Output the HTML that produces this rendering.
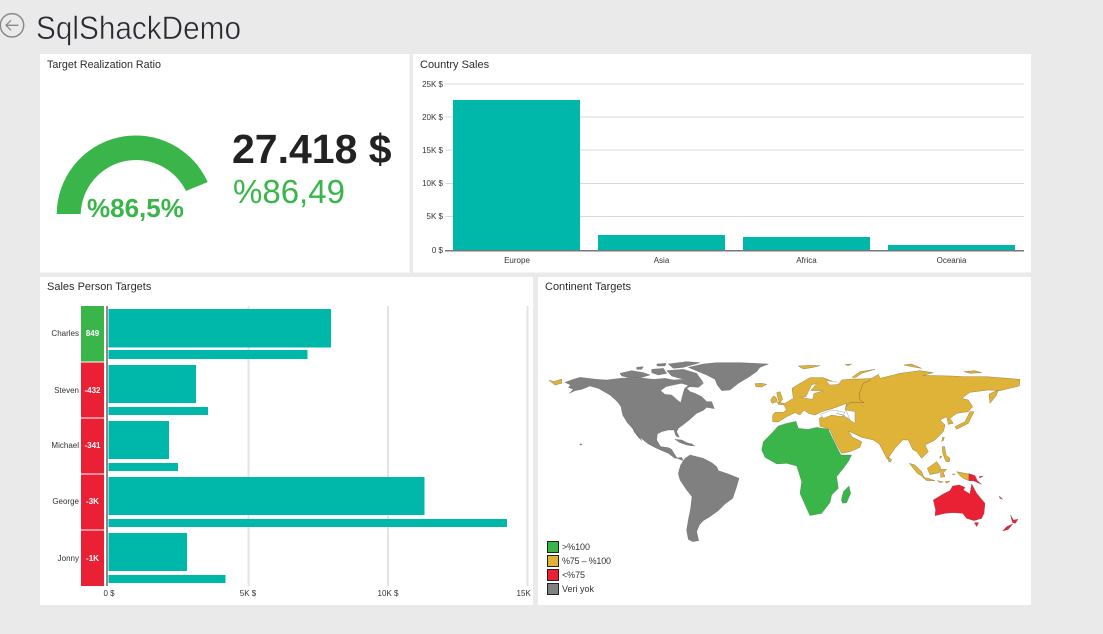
<!DOCTYPE html>
<html><head><meta charset="utf-8"><style>
html,body{margin:0;padding:0;background:#eaeaea;width:1103px;height:634px;overflow:hidden}
svg{display:block;font-family:"Liberation Sans",sans-serif}
.t{font-size:11px;fill:#2c2c30}
.a{font-size:8px;fill:#333}
.n{font-size:8px;fill:#333;text-anchor:end}
.v{font-size:8px;font-weight:bold;fill:#fff;text-anchor:middle}
.c{text-anchor:middle}
.l{font-size:9px;fill:#333}
</style></head><body>
<svg width="1103" height="634" viewBox="0 0 1103 634">
<rect width="1103" height="634" fill="#eaeaea"/>
<circle cx="12" cy="25.300" r="11.700" fill="none" stroke="#8a8a8a" stroke-width="1.500"/>
<path d="M18.500 25.300H6M11 20.300L6 25.300L11 30.300" fill="none" stroke="#8a8a8a" stroke-width="1.300"/>
<text x="36" y="39" font-size="32" fill="#2a2a32" stroke="#eaeaea" stroke-width=".55" textLength="205" lengthAdjust="spacingAndGlyphs">SqlShackDemo</text>

<rect x="40" y="54" width="369.500" height="218.500" fill="#fff"/>
<rect x="413" y="54" width="618" height="218.500" fill="#fff"/>
<rect x="40" y="277" width="493" height="328" fill="#fff"/>
<rect x="538" y="277" width="493" height="328" fill="#fff"/>

<text class="t" x="47" y="68" textLength="114" lengthAdjust="spacingAndGlyphs">Target Realization Ratio</text>
<path d="M56.700 214A79 79 0 0 1 207.700 182L186 191A55.500 55.500 0 0 0 80.700 214Z" fill="#39b54a"/>
<text x="87" y="217" font-size="26" font-weight="bold" fill="#39b54a">%86,5%</text>
<text x="232" y="163" font-size="41" font-weight="bold" fill="#222">27.418 $</text>
<text x="233" y="203" font-size="33" fill="#39b54a">%86,49</text>

<text class="t" x="420" y="68">Country Sales</text>
<g fill="#d9d9d9">
<rect x="445" y="83.500" width="579" height="1"/><rect x="445" y="116.500" width="579" height="1"/><rect x="445" y="149.500" width="579" height="1"/><rect x="445" y="183" width="579" height="1"/><rect x="445" y="216" width="579" height="1"/>
</g>
<g class="n"><text class="n" x="443" y="87">25K $</text><text class="n" x="443" y="120">20K $</text><text class="n" x="443" y="153">15K $</text><text class="n" x="443" y="186">10K $</text><text class="n" x="443" y="219">5K $</text><text class="n" x="443" y="253">0 $</text></g>
<g fill="#00b8aa">
<rect x="453" y="100" width="127" height="150"/><rect x="598" y="235" width="127" height="15"/><rect x="743" y="237" width="127" height="13"/><rect x="888" y="245" width="127" height="5"/>
</g>
<rect x="445" y="250" width="579" height="1.500" fill="#777"/>
<g class="a"><text class="a c" x="517" y="263">Europe</text><text class="a c" x="661.500" y="263">Asia</text><text class="a c" x="806.500" y="263">Africa</text><text class="a c" x="951.500" y="263">Oceania</text></g>

<text class="t" x="47" y="290">Sales Person Targets</text>
<g fill="#e3e3e3"><rect x="247.500" y="306" width="2" height="280"/><rect x="387" y="306" width="2" height="280"/><rect x="526.500" y="306" width="2" height="280"/></g>
<rect x="81" y="306" width="23" height="55.500" fill="#39b54a"/>
<g fill="#ea2034"><rect x="81" y="362.500" width="23" height="55"/><rect x="81" y="418.500" width="23" height="55"/><rect x="81" y="474.500" width="23" height="55"/><rect x="81" y="530.500" width="23" height="55.500"/></g>
<rect x="106" y="306" width="2" height="280" fill="#8c8c8c"/>
<g fill="#00b8aa">
<rect x="108.500" y="309" width="222.500" height="38.500"/><rect x="108.500" y="350" width="199" height="9"/>
<rect x="108.500" y="365" width="87.500" height="38"/><rect x="108.500" y="407" width="99.500" height="8"/>
<rect x="108.500" y="421" width="60.500" height="38"/><rect x="108.500" y="463" width="69.500" height="8"/>
<rect x="108.500" y="477" width="316" height="38"/><rect x="108.500" y="519" width="398.500" height="8"/>
<rect x="108.500" y="533" width="78.500" height="38"/><rect x="108.500" y="575" width="117" height="8"/>
</g>
<g><text class="n" x="79" y="336">Charles</text><text class="n" x="79" y="393">Steven</text><text class="n" x="79" y="448">Michael</text><text class="n" x="79" y="504">George</text><text class="n" x="79" y="561">Jonny</text></g>
<g><text class="v" x="92.500" y="336">849</text><text class="v" x="92.500" y="393">-432</text><text class="v" x="92.500" y="448">-341</text><text class="v" x="92.500" y="504">-3K</text><text class="v" x="92.500" y="561">-1K</text></g>
<text class="a c" x="109" y="596">0 $</text><text class="a c" x="248" y="596">5K $</text><text class="a c" x="388" y="596">10K $</text>
<svg x="500" y="586" width="33" height="14" viewBox="500 586 33 14"><text class="a c" x="527" y="596">15K $</text></svg>

<text class="t" x="545" y="290">Continent Targets</text>

<g transform="translate(540,350) scale(.3333)" stroke="#5f5f5f" stroke-width="1" stroke-linejoin="round">
<g fill="#808080">
<path d="M75 97L100 88L120 82L170 88L200 90L240 85L290 82L340 88L375 85L400 90L430 88L455 92L490 100L475 112L450 110L440 115L450 125L465 130L485 140L500 155L515 155L523 176L500 172L490 181L470 190L450 208L435 220L415 235L410 245L418 262L408 258L402 240L385 240L365 245L352 252L350 270L362 290L385 293L395 298L402 310L412 325L430 332L425 322L405 325L385 310L350 295L325 282L300 262L280 238L262 218L248 195L243 170L232 155L210 135L175 115L150 108L125 118L105 122L88 130L100 118L85 112L92 105Z"/>
<path d="M278 232L290 245L305 272L295 262L282 245Z"/>
<path d="M240 70L275 62L310 68L330 75L305 82L265 82L245 78Z"/>
<path d="M290 52L310 50L305 58L290 58Z"/><path d="M335 58L370 55L380 70L355 75L335 68Z"/><path d="M385 42L440 35L480 38L430 52L400 55Z"/><path d="M380 62L430 58L470 70L490 98L450 90L420 85L395 78Z"/><path d="M350 42L378 40L375 48L352 48Z"/>
<path d="M445 52L490 42L530 38L600 38L685 42L660 52L650 65L625 82L595 100L570 120L545 122L532 105L525 88L500 75Z"/>
<path d="M405 268L425 270L445 280L465 288L440 285L420 278Z"/>
<path d="M445 280L458 282L455 288L445 285Z"/>
<path d="M422 345L435 325L450 315L470 320L490 325L515 338L530 350L535 362L565 372L597 385L590 410L578 445L555 462L535 482L510 500L490 512L478 525L470 545L476 572L458 575L445 568L440 540L445 510L452 475L456 440L440 420L420 390L415 370Z"/>
<path d="M120 282L125 282L125 285L120 285Z"/>
</g>
<path d="M362 122L378 110L400 105L425 100L445 106L434 115L428 135L422 158L412 150L395 135L375 133Z" fill="#fff" stroke="#6a6a6a"/>
<path d="M27 92L42 96L65 88L65 102L45 108Z" transform="translate(0,8) scale(1,.9)" fill="#dfb238"/>
<path d="M645 101L665 100L680 103L665 111L648 110Z" fill="#dfb238"/>
</g>

<g transform="translate(780,350) scale(.3333)" stroke="#6e6230" stroke-width="1" stroke-linejoin="round">
<g fill="#dfb238">
<path d="M-22 215L-22 195L-15 187L10 187L20 180L12 165L-5 163L-8 157L15 160L40 145L36 115L60 100L90 83L130 83L155 93L145 100L175 105L185 90L215 87L240 87L275 85L295 73L300 85L360 70L420 62L460 68L430 76L515 78L550 80L620 80L720 88L718 108L660 122L625 120L570 127L545 145L565 150L578 170L565 185L530 190L510 205L520 220L505 223L500 200L480 210L495 225L490 245L465 270L445 280L435 285L445 305L425 325L410 305L398 298L385 270L368 270L345 295L322 328L310 305L298 282L280 270L245 262L205 243L218 262L245 275L240 292L210 305L185 310L165 275L150 240L120 228L118 205L135 195L170 195L195 200L222 216L225 195L195 180L200 160L160 175L125 185L105 195L85 190L72 180L60 195L45 188L20 200L-5 216Z"/>
<path d="M-28 150L-20 138L-12 142L-8 155L-24 160Z"/>
<path d="M-10 128L0 125L8 148L-2 160L-6 145Z"/>
<path d="M627 132L655 120L648 138L630 160Z"/>
<path d="M525 230L555 215L570 185L582 185L565 220L530 238Z"/>
<path d="M55 48L90 46L120 47L100 52L70 57Z"/><path d="M195 44L215 42L205 47Z"/><path d="M216 82L240 65L285 58L245 70L228 82Z"/><path d="M372 45L395 42L425 55L395 50Z"/><path d="M552 65L585 62L605 68L570 70Z"/>
<path d="M388 340L405 345L425 365L432 382L412 370Z"/><path d="M428 382L445 385L465 392L440 392Z"/><path d="M470 335L482 352L478 368L450 374L442 355Z"/><path d="M482 358L500 358L490 368L495 380L482 382Z"/><path d="M487 290L494 290L498 315L510 325L508 335L498 335L488 310Z"/><path d="M325 323L335 328L332 336L326 335Z"/><path d="M488 262L493 262L490 272L485 275Z"/><path d="M472 392L490 396L480 398Z"/><path d="M495 395L510 393L500 400Z"/><path d="M517 372L526 372L520 375Z"/><path d="M480 318L486 320L480 326Z"/>
<path d="M530 365L545 368L567 372L567 392L550 385L538 375Z"/>
</g>
<g fill="#fff" stroke="#777">
<path d="M62 142L78 140L95 105L110 100L92 122L130 123L102 130L98 148Z"/>
<path d="M122 193L155 180L195 187L185 200L155 195L130 205Z"/>
<path d="M198 180L225 185L225 220L210 210Z"/>
<path d="M138 92L170 96L178 103L150 105Z"/>
</g>
<path d="M240 150L238 130L250 100L272 90M240 150L252 158L210 157L197 170M170 190L195 197" fill="none" stroke="#8a6f2c" stroke-width="1.500"/>
<g fill="#3ab54a" stroke="#5a7a5a">
<path d="M-55 300L-50 275L-30 255L-5 228L20 220L48 214L55 235L85 238L110 232L145 238L160 270L183 315L215 315L205 335L190 355L170 380L175 415L155 435L150 458L125 490L90 497L82 480L60 430L65 395L50 348L20 340L-10 342L-45 322Z"/>
<path d="M207 408L212 430L200 458L188 460L184 450L190 425Z"/>
</g>
<g fill="#ea2034" stroke="#7a3a3a">
<path d="M460 450L490 432L510 422L518 408L538 405L555 412L550 420L570 432L575 402L590 430L615 460L612 490L605 505L582 512L560 505L548 490L520 488L495 490L465 497L467 480Z"/>
<path d="M583 518L596 518L590 530Z"/>
<path d="M692 495L700 510L714 508L706 520L698 518L694 505Z"/><path d="M698 522L685 538L668 543L680 530Z"/>
<path d="M567 371L585 377L592 392L605 403L582 393L567 392Z"/>
<path d="M597 380L610 378L600 384Z"/><path d="M658 438L668 448L660 445Z"/>
</g>
</g>

<g stroke="#222" stroke-width="1">
<rect x="547.500" y="541.500" width="11" height="11" fill="#39b54a"/>
<rect x="547.500" y="555.500" width="11" height="11" fill="#dfb238"/>
<rect x="547.500" y="569.500" width="11" height="11" fill="#ea2034"/>
<rect x="547.500" y="583.500" width="11" height="11" fill="#808080"/>
</g>
<text class="l" x="562" y="550" textLength="28">&gt;%100</text>
<text class="l" x="562" y="564" textLength="49">%75 – %100</text>
<text class="l" x="562" y="578" textLength="23">&lt;%75</text>
<text class="l" x="562" y="592" textLength="32">Veri yok</text>
</svg>
</body></html>
